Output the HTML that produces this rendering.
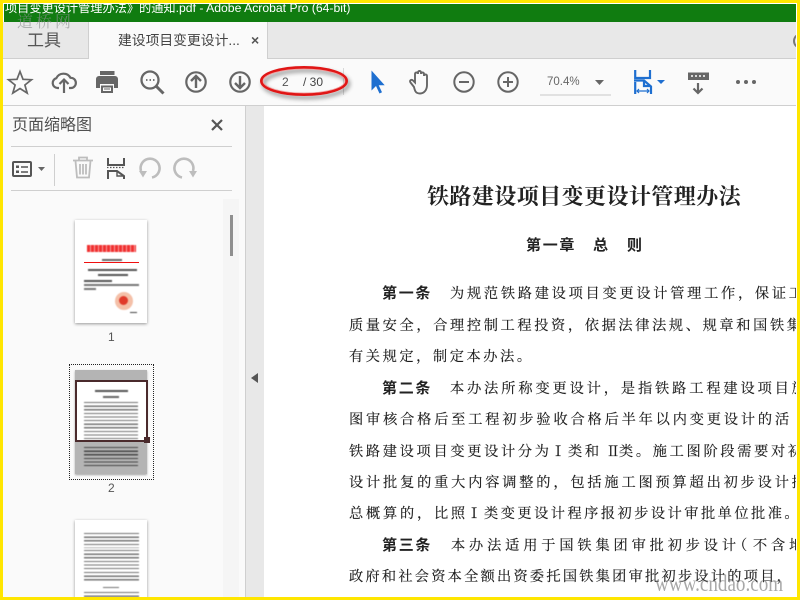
<!DOCTYPE html>
<html lang="zh-CN"><head><meta charset="utf-8"><title>PDF</title>
<style>
html,body{margin:0;padding:0}
body{width:800px;height:600px;overflow:hidden;position:relative;background:#fff;font-family:"Liberation Sans","Noto Sans CJK SC",sans-serif}
div,span,svg{position:absolute}
.l{left:0;white-space:pre;font:14.2px/20px "Noto Serif CJK SC",serif;color:#1a1a1a;letter-spacing:2.7px;-webkit-text-stroke:.15px #222}
.b{font:bold 15px/20px "Noto Sans CJK SC",sans-serif;color:#222;letter-spacing:1.7px}
.th{background:repeating-linear-gradient(to bottom,#444 0 1.2px,#fff 1.2px 3.6px);opacity:.75;filter:blur(.45px)}
</style></head><body>
<!-- document -->
<div style="left:264px;top:106px;width:533px;height:491px;background:#fff;overflow:hidden">
<div style="left:163px;top:75px;white-space:pre;font:bold 22px/30px 'Noto Serif CJK SC',serif;color:#222;letter-spacing:.43px">铁路建设项目变更设计管理办法</div>
<div class="b" style="left:262px;top:129px;letter-spacing:1.7px">第一章<span style="left:67px;top:0">总</span><span style="left:101px;top:0">则</span></div>
<div class="b" style="left:118px;top:177px">第一条</div>
<div class="l" style="left:186px;top:177px;letter-spacing:2.75px">为规范铁路建设项目变更设计管理工作&#xFF0C;保证工</div>
<div class="l" style="left:85px;top:209px;letter-spacing:2.65px">质量安全&#xFF0C;合理控制工程投资&#xFF0C;依据法律法规&#x3001;规章和国铁集</div>
<div class="l" style="left:85px;top:240px;letter-spacing:2.6px">有关规定&#xFF0C;制定本办法&#x3002;</div>
<div class="b" style="left:118px;top:272px">第二条</div>
<div class="l" style="left:186px;top:272px;letter-spacing:2.9px">本办法所称变更设计&#xFF0C;是指铁路工程建设项目施</div>
<div class="l" style="left:85px;top:303px;letter-spacing:2.85px">图审核合格后至工程初步验收合格后半年以内变更设计的活</div>
<div class="l" style="left:85px;top:335px">铁路建设项目变更设计分为</div>
<div class="l" style="left:287px;top:335px">Ⅰ</div>
<div class="l" style="left:304px;top:335px">类和</div>
<div class="l" style="left:342px;top:335px">Ⅱ</div>
<div class="l" style="left:355px;top:335px">类&#x3002;施工图阶段需要对初</div>
<div class="l" style="left:85px;top:366px;letter-spacing:2.84px">设计批复的重大内容调整的&#xFF0C;包括施工图预算超出初步设计批</div>
<div class="l" style="left:85px;top:397px;letter-spacing:2.8px">总概算的&#xFF0C;比照</div>
<div class="l" style="left:203px;top:397px">Ⅰ</div>
<div class="l" style="left:220px;top:397px;letter-spacing:2.5px">类变更设计程序报初步设计审批单位批准&#x3002;</div>
<div class="b" style="left:118px;top:429px">第三条</div>
<div class="l" style="left:187px;top:429px;letter-spacing:3.87px">本办法适用于国铁集团审批初步设计</div>
<div class="l" style="left:469px;top:429px">&#xFF08;</div>
<div class="l" style="left:489px;top:429px;letter-spacing:3.87px">不含地</div>
<div class="l" style="left:85px;top:460px;letter-spacing:2.26px">政府和社会资本全额出资委托国铁集团审批初步设计的项目&#xFF0C;</div>
</div>
<!-- sidebar -->
<div style="left:3px;top:106px;width:242px;height:491px;background:#fafafa;overflow:hidden">
<div style="left:9px;top:9px;font-size:16px;line-height:22px;color:#505050;white-space:nowrap">页面缩略图</div>
<div style="left:8px;top:40px;width:221px;height:1px;background:#cfcfcf"></div>
<div style="left:8px;top:84px;width:221px;height:1px;background:#cfcfcf"></div>
<div style="left:51px;top:48px;width:1px;height:32px;background:#cfcfcf"></div>
<div style="left:220px;top:93px;width:16px;height:398px;background:#f5f5f5"></div>
<div style="left:227px;top:109px;width:3px;height:41px;background:#8f8f8f"></div>
<!-- thumb1 -->
<div style="left:72px;top:114px;width:72px;height:103px;background:#fff;box-shadow:0 1px 3px rgba(0,0,0,.4)">
<div style="left:12px;top:25px;width:49px;height:7px;background:repeating-linear-gradient(to right,#f03030 0 3px,#f8a0a0 3px 4px);filter:blur(.5px)"></div>
<div style="left:9px;top:42px;width:55px;height:1px;background:#f01010"></div>
<div style="filter:blur(.5px);left:0;top:0;width:72px;height:103px">
<div style="left:27px;top:39px;width:20px;height:1.5px;background:#666"></div>
<div style="left:13px;top:49px;width:49px;height:2px;background:#555"></div>
<div style="left:23px;top:54px;width:30px;height:2px;background:#555"></div>
<div style="left:9px;top:60px;width:28px;height:1.5px;background:#555"></div>
<div style="left:9px;top:64px;width:55px;height:1.5px;background:#777"></div>
<div style="left:9px;top:68px;width:12px;height:1.5px;background:#777"></div>
<div style="left:40px;top:72px;width:18px;height:18px;border-radius:50%;background:#f4c0a8"></div>
<div style="left:44px;top:76px;width:9px;height:9px;border-radius:50%;background:#e03a2a"></div>
<div style="left:55px;top:92px;width:7px;height:1px;background:#444"></div>
</div>
</div>
<div style="left:105px;top:224px;font-size:12px;line-height:14px;color:#555">1</div>
<!-- thumb2 -->
<div style="left:66px;top:258px;width:83px;height:114px;border:1px dotted #222"></div>
<div style="left:72px;top:264px;width:72px;height:104px;background:#b4b4b4;box-shadow:0 1px 2px rgba(0,0,0,.35)">
<div style="left:0;top:10px;width:72px;height:62px;background:#fff"></div>
<div style="left:20px;top:20px;width:33px;height:2px;background:#555;filter:blur(.4px)"></div>
<div style="left:28px;top:26px;width:16px;height:1.5px;background:#666;filter:blur(.4px)"></div>
<div class="th" style="left:9px;top:32px;width:54px;height:39px"></div>
<div class="th" style="left:9px;top:77px;width:54px;height:20px;opacity:.9;background:repeating-linear-gradient(to bottom,#3a3a3a 0 1.2px,#b4b4b4 1.2px 3.6px)"></div>
<div style="left:0;top:10px;width:69px;height:58px;border:2px solid #4a2a2c"></div>
<div style="left:69px;top:67px;width:6px;height:6px;background:#4a2a2c"></div>
</div>
<div style="left:105px;top:375px;font-size:12px;line-height:14px;color:#555">2</div>
<!-- thumb3 -->
<div style="left:72px;top:414px;width:72px;height:90px;background:#fff;box-shadow:0 1px 3px rgba(0,0,0,.4)">
<div class="th" style="left:9px;top:13px;width:55px;height:15px"></div>
<div class="th" style="left:9px;top:30px;width:55px;height:21px"></div>
<div class="th" style="left:9px;top:52px;width:55px;height:11px"></div>
<div class="th" style="left:28px;top:67px;width:16px;height:3px"></div>
<div class="th" style="left:9px;top:72px;width:55px;height:18px"></div>
</div>
</div>
<div style="left:245px;top:106px;width:19px;height:491px;background:#e8e8e8;border-left:1px solid #cfcfcf;box-sizing:border-box"></div>
<div style="left:251px;top:373px;width:0;height:0;border:5px solid transparent;border-right:7px solid #555;border-left:0"></div>
<!-- toolbar -->
<div style="left:3px;top:59px;width:794px;height:46px;background:#fafafa"></div>
<div style="left:3px;top:105px;width:794px;height:1px;background:#cfcfcf"></div>
<!-- tabs -->
<div style="left:3px;top:22px;width:794px;height:36px;background:#e8e8e8"></div>
<div style="left:3px;top:58px;width:794px;height:1px;background:#cfcfcf"></div>
<div style="left:88px;top:22px;width:180px;height:37px;background:#fafafa;border-left:1px solid #cfcfcf;border-right:1px solid #cfcfcf;box-sizing:border-box"></div>
<div style="left:27px;top:30px;font-size:17px;line-height:22px;color:#555;white-space:nowrap">工具</div>
<div style="left:118px;top:31px;font-size:13.8px;line-height:20px;color:#444;white-space:nowrap">建设项目变更设计...</div>
<div style="left:251px;top:30px;font:bold 14px/20px 'Liberation Sans',sans-serif;color:#555">×</div>
<div style="left:793px;top:33px;width:12px;height:12px;border:2px solid #777;border-radius:50%"></div>
<!-- title -->
<div style="left:4px;top:4px;width:792px;height:18px;background:#107c10;overflow:hidden">
<div style="left:1px;top:-5px;font-size:12.2px;line-height:18px;color:#fff;white-space:nowrap">项目变更设计管理办法》的通知.pdf - Adobe Acrobat Pro (64-bit)</div>
</div>
<div style="left:17px;top:9px;font:16px/24px 'Noto Serif CJK SC',serif;color:rgba(140,145,145,.65);letter-spacing:3px;white-space:nowrap">道桥网</div>
<!-- icons -->
<svg style="left:0;top:0" width="800" height="600" viewBox="0 0 800 600" fill="none">
<defs><filter id="s" x="-20%" y="-50%" width="140%" height="200%"><feDropShadow dx="2" dy="3" stdDeviation="2" flood-color="#000" flood-opacity=".45"/></filter></defs>
<g stroke="#666" stroke-width="2">
<path d="M20 71.500l3 7.800 8.500.4-6.600 5.300 2.300 8.100-7.200-4.600-7.200 4.600 2.300-8.100-6.600-5.300 8.500-.4z" stroke-width="1.700"/>
<path d="M59 88h-1.500a5 5 0 0 1-1.200-9.800 8 8 0 0 1 14.200-.4 5 5 0 0 1 .5 10.200H69M64 93V80M59.500 84l4.500-4.500 4.500 4.500" stroke-width="2.200"/>
<circle cx="150" cy="80" r="8.500" stroke-width="2.300"/><path d="M156.500 86.500l7 7" stroke-width="3"/>
<path d="M146 80h1.500M149.500 80h1.500M153 80h1.500" stroke-width="1.700"/>
<circle cx="196" cy="82" r="9.700" stroke-width="2.200"/><path d="M196 88V76.500M191 81l5-5 5 5" stroke-width="2.400"/>
<circle cx="240" cy="82" r="9.700" stroke-width="2.200"/><path d="M240 76v11.500M235 83l5 5 5-5" stroke-width="2.400"/>
<path d="M414 87l-3.500-4.500c-1.500-2 1-3.500 2.500-2l2 2V74c0-2 3-2 3 0v-1.500c0-2 3-2 3 0V74c0-2 3-2 3 0v2c0-2 3-2 3 0v9c0 5-3 8.500-7 8.500s-5-2-6-6.500z" stroke-width="1.900"/>
<circle cx="464" cy="82" r="9.700" stroke-width="2"/><path d="M459 82h10" stroke-width="2"/>
<circle cx="508" cy="82" r="9.700" stroke-width="2"/><path d="M503 82h10M508 77v10" stroke-width="2"/>
<path d="M698 83v9M693.500 88.500l4.500 4.500 4.500-4.500" stroke-width="2.200"/>
</g>
<path d="M96 79a3 3 0 0 1 3-3h16a3 3 0 0 1 3 3v9h-4v-4H100v4h-4zM100 71h14.500v4H100zM101 85.500h12V93H101z" fill="#666"/>
<path d="M103 87.500h8v3.500h-8z" fill="#fafafa"/><path d="M104 89h6" stroke="#666" stroke-width="1"/>
<path d="M371.500 70.500v20l4.500-4.500 3.500 7.500 2.500-1.200-3.300-7h6z" fill="#1e6fd0"/>
<path d="M343.500 68v27" stroke="#d8d8d8"/>
<path d="M540 95h71" stroke="#c8c8c8"/>
<path d="M595 80h9l-4.500 5z" fill="#666"/>
<path d="M657 80h8l-4 4z" fill="#1e6fd0"/>
<g stroke="#1e6fd0" stroke-width="2.200">
<path d="M635.200 70v8h14.800v-8M634 80.500h10l7 6v7.500M635.200 82v12"/>
<path d="M644 81v5h6.500"/>
<path d="M637 91h12M639 89l-2 2 2 2M647 89l2 2-2 2" stroke-width="1.200"/>
</g>
<path d="M688 72.500h21v7.500h-21z" fill="#666"/><path d="M691 76h2M695 76h2M699 76h2M703 76h2" stroke="#fff" stroke-width="1.500"/>
<circle cx="738" cy="82" r="2" fill="#666"/><circle cx="746" cy="82" r="2" fill="#666"/><circle cx="754" cy="82" r="2" fill="#666"/>
<!-- sidebar icons -->
<path d="M212 120l10 10M222 120l-10 10" stroke="#555" stroke-width="2.200"/>
<rect x="13" y="162" width="18" height="14" rx="1" stroke="#555" stroke-width="2"/>
<path d="M16 165.500h3v2.500h-3zM16 170.500h3v2.500h-3z" fill="#555"/><path d="M21 167h7M21 172h7" stroke="#555" stroke-width="1.600"/>
<path d="M38 167h7l-3.500 4z" fill="#666"/>
<g stroke="#bdbdbd" stroke-width="2">
<path d="M73 160.500h20M79 160v-2.500h8v2.500M75.500 161l1.500 16.500h12l1.500-16.500M80 164v10.500M83 164v10.500M86 164v10.500" stroke-width="1.800"/>
<path d="M152 177.500A9.500 9.500 0 1 0 141 171" stroke-width="2.600"/><path d="M139 171h8l-4 6.500z" fill="#bdbdbd" stroke="none"/>
<path d="M182 177.500A9.500 9.500 0 1 1 193 171" stroke-width="2.600"/><path d="M197 171h-8l4 6.500z" fill="#bdbdbd" stroke="none"/>
</g>
<g stroke="#555" stroke-width="2">
<path d="M108 158v7h16v-7M108 179v-8h9l7 5v3" />
<path d="M107 167.500h17" stroke="#555" stroke-dasharray="1.500 1.500" stroke-width="1.200"/>
<path d="M117 172v4h6" stroke-width="1.400"/>
</g>
<!-- red oval -->
<g filter="url(#s)"><ellipse cx="304" cy="81" rx="42.500" ry="13.500" stroke="#e01818" stroke-width="3"/></g>
<ellipse cx="304" cy="81" rx="41" ry="12" stroke="#f4a0a0" stroke-width=".7"/>
</svg>
<div style="left:282px;top:74px;font-size:12px;line-height:16px;color:#555">2</div>
<div style="left:303px;top:74px;font-size:12px;line-height:16px;color:#444;white-space:nowrap">/ 30</div>
<div style="left:547px;top:74px;font-size:11.5px;line-height:16px;color:#666;white-space:nowrap">70.4%</div>
<!-- watermark -->
<div style="left:655px;top:570px;font:23px/28px 'Liberation Serif',serif;color:rgba(110,110,110,.6);white-space:nowrap;transform:scaleX(.83);transform-origin:0 0">www.cndao.com</div>
<!-- frame -->
<div style="left:0;top:0;width:800px;height:3px;background:#ffe600"></div>
<div style="left:0;top:597px;width:800px;height:3px;background:#ffe600"></div>
<div style="left:0;top:0;width:3px;height:600px;background:#ffe600"></div>
<div style="left:797px;top:0;width:3px;height:600px;background:#ffe600"></div>
<div style="left:3px;top:3px;width:794px;height:1px;background:#fff"></div>
<div style="left:796px;top:3px;width:1px;height:594px;background:#fff"></div>
</body></html>
